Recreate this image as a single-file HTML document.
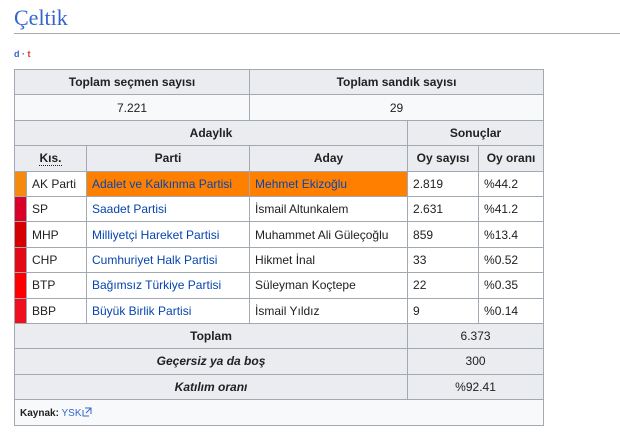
<!DOCTYPE html>
<html><head><meta charset="utf-8"><style>
body{margin:0;background:#fff;font-family:"Liberation Sans",Arial,sans-serif;color:#202122}
h1{position:absolute;left:14px;top:5px;margin:0;font-family:"Liberation Serif",serif;font-weight:normal;font-size:22px;color:#3366cc;}
.hr{position:absolute;left:14px;top:33px;width:606px;height:1px;background:#a2a9b1}
.dt{position:absolute;left:14px;top:49px;font-size:9px;font-weight:bold}
table{position:absolute;left:14px;top:69px;border-collapse:collapse;table-layout:fixed;width:529px;font-size:12px;background:#f8f9fa}
td,th{border:1px solid #a2a9b1;padding:0 5px;height:24.4px;overflow:hidden;white-space:nowrap}
th{background:#eaecf0;text-align:center;font-weight:bold}
td.c{text-align:center}
tr.d td{background:#fff}
a{color:#0645ad;text-decoration:none}
.bar{padding:0}
</style></head><body>
<h1>Çeltik</h1>
<div class="hr"></div>
<div class="dt"><span style="color:#3366cc">d</span> <span style="color:#3366cc">·</span> <span style="color:#d33">t</span></div>
<table>
<colgroup><col style="width:12px"><col style="width:60px"><col style="width:163px"><col style="width:158px"><col style="width:71px"><col style="width:65px"></colgroup>
<tr><th colspan="3">Toplam seçmen sayısı</th><th colspan="3">Toplam sandık sayısı</th></tr>
<tr><td colspan="3" class="c">7.221</td><td colspan="3" class="c">29</td></tr>
<tr><th colspan="4">Adaylık</th><th colspan="2">Sonuçlar</th></tr>
<tr><th colspan="2"><span style="border-bottom:1px dotted #202122">Kıs.</span></th><th>Parti</th><th>Aday</th><th>Oy sayısı</th><th>Oy oranı</th></tr>
<tr class="d"><td class="bar" style="background:#f58a0f"></td><td>AK Parti</td><td style="background:#ff8000"><a>Adalet ve Kalkınma Partisi</a></td><td style="background:#ff8000"><a>Mehmet Ekizoğlu</a></td><td>2.819</td><td>%44.2</td></tr>
<tr class="d"><td class="bar" style="background:#d9002a"></td><td>SP</td><td><a>Saadet Partisi</a></td><td>İsmail Altunkalem</td><td>2.631</td><td>%41.2</td></tr>
<tr class="d"><td class="bar" style="background:#d50000"></td><td>MHP</td><td><a>Milliyetçi Hareket Partisi</a></td><td>Muhammet Ali Güleçoğlu</td><td>859</td><td>%13.4</td></tr>
<tr class="d"><td class="bar" style="background:#e30a17"></td><td>CHP</td><td><a>Cumhuriyet Halk Partisi</a></td><td>Hikmet İnal</td><td>33</td><td>%0.52</td></tr>
<tr class="d"><td class="bar" style="background:#ff0000"></td><td>BTP</td><td><a>Bağımsız Türkiye Partisi</a></td><td>Süleyman Koçtepe</td><td>22</td><td>%0.35</td></tr>
<tr class="d"><td class="bar" style="background:#ef0f1f"></td><td>BBP</td><td><a>Büyük Birlik Partisi</a></td><td>İsmail Yıldız</td><td>9</td><td>%0.14</td></tr>
<tr><th colspan="4">Toplam</th><th colspan="2" style="font-weight:normal">6.373</th></tr>
<tr><th colspan="4"><i>Geçersiz ya da boş</i></th><th colspan="2" style="font-weight:normal">300</th></tr>
<tr><th colspan="4"><i>Katılım oranı</i></th><th colspan="2" style="font-weight:normal">%92.41</th></tr>
<tr><td colspan="6" style="font-size:10px;height:25px"><b>Kaynak:</b> <a style="color:#3366cc">YSK<svg width="10" height="10" viewBox="0 0 10 10" style="vertical-align:-1px"><path d="M1 3v6h6M3 1h6v6M9 1L4 6" fill="none" stroke="#3366cc" stroke-width="1"/></svg></a></td></tr>
</table>
</body></html>
